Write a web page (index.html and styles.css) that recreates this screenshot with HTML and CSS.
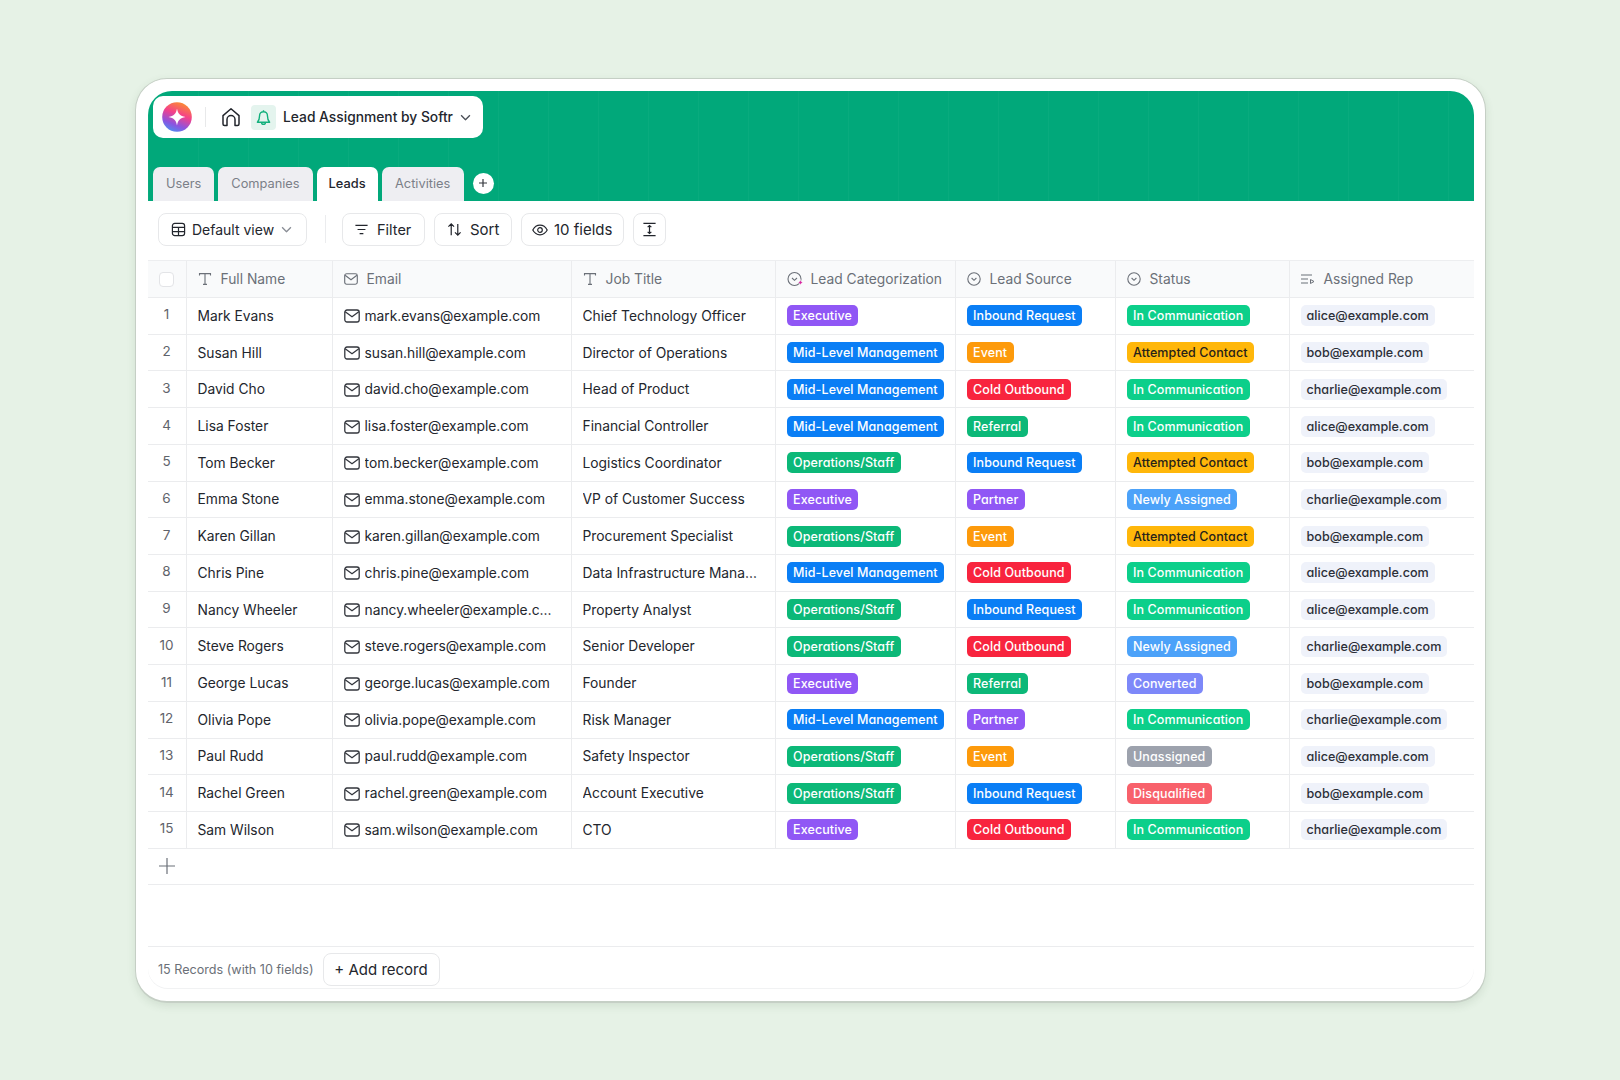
FILE: index.html
```html
<!DOCTYPE html>
<html>
<head>
    <title>Lead Assignment by Softr</title>
    <link rel="stylesheet" href="styles.css">
</head>
<body>
    <svg class="sprite" xmlns="http://www.w3.org/2000/svg">
        <symbol id="i-mail" viewBox="0 0 16 14"><rect x="0.8" y="1" width="14.4" height="12" rx="2.2" fill="none" stroke="currentColor" stroke-width="1.3"/><path d="M1.2 2.8 8 7.8l6.8-5" fill="none" stroke="currentColor" stroke-width="1.3"/></symbol>
        <symbol id="i-text" viewBox="0 0 14 14"><path d="M1.5 3.4V1.6h11v1.8M7 1.6v10.8M5 12.4h4" fill="none" stroke="currentColor" stroke-width="1.1"/></symbol>
        <symbol id="i-select" viewBox="0 0 14 14"><circle cx="7" cy="7" r="6.2" fill="none" stroke="currentColor" stroke-width="1.1"/><path d="M4.6 6 7 8.3 9.4 6" fill="none" stroke="currentColor" stroke-width="1.1"/></symbol>
        <symbol id="i-chevron" viewBox="0 0 10 6"><path d="M1 1l4 4 4-4" fill="none" stroke="currentColor" stroke-width="1.2"/></symbol>
    </svg>

    <div class="frame">
        <div class="app">
            <!-- Green header with base name and tabs -->
            <div class="topbar">
                <div class="base-pill">
                    <svg class="logo" viewBox="0 0 30 30">
                        <defs>
                            <linearGradient id="logoFill" x1="0.7" y1="0" x2="0.3" y2="1">
                                <stop offset="0" stop-color="#fb8f2e"/>
                                <stop offset="0.4" stop-color="#f4418a"/>
                                <stop offset="0.75" stop-color="#8a55e0"/>
                                <stop offset="1" stop-color="#4f8df0"/>
                            </linearGradient>
                        </defs>
                        <circle cx="15" cy="15" r="14.8" fill="url(#logoFill)"/>
                        <path d="M15 6.5c.9 5.3 3 7.5 8.500 8.500-5.500 1-7.600 3.200-8.500 8.500-.9-5.300-3-7.500-8.500-8.500 5.500-1 7.600-3.200 8.500-8.500z" fill="#fff"/>
                    </svg>
                    <span class="pill-divider"></span>
                    <svg class="home-icon" viewBox="0 0 20 20"><path d="M2 8.600 10 1.800l8 6.800v8.400a1.500 1.500 0 0 1-1.500 1.500H14v-6a4 4 0 0 0-8 0v6H3.500A1.500 1.500 0 0 1 2 17z" fill="none" stroke="#23262d" stroke-width="1.500" stroke-linejoin="round"/></svg>
                    <span class="bell-tile">
                        <svg viewBox="0 0 16 18"><path d="M8 1.200v1.400M3.800 7a4.200 4.200 0 0 1 8.400 0c0 4 1 5.500 2.300 7H1.500c1.300-1.500 2.300-3 2.300-7zM6 14.200a2 2 0 0 0 4 0" fill="none" stroke="#12b07c" stroke-width="1.500" stroke-linejoin="round"/></svg>
                    </span>
                    <span class="base-name">Lead Assignment by Softr</span>
                    <svg class="chevron" viewBox="0 0 10 6"><use href="#i-chevron"/></svg>
                </div>
                <div class="tabs">
                    <span class="tab">Users</span>
                    <span class="tab">Companies</span>
                    <span class="tab active">Leads</span>
                    <span class="tab">Activities</span>
                    <span class="tab-add">
                        <svg viewBox="0 0 10 10"><path d="M5 1v8M1 5h8" stroke="#33363d" stroke-width="1.200"/></svg>
                    </span>
                </div>
            </div>

            <!-- Toolbar -->
            <div class="toolbar">
                <button class="tool view-btn">
                    <svg class="tool-icon" viewBox="0 0 16 16"><rect x="1.500" y="1.500" width="13" height="13" rx="2.500" fill="none" stroke="#23262d" stroke-width="1.300"/><path d="M1.500 5.800h13M1.500 10.200h13M8 5.800v8.700" stroke="#23262d" stroke-width="1.300"/></svg>
                    Default view
                    <svg class="chevron muted" viewBox="0 0 10 6"><use href="#i-chevron"/></svg>
                </button>
                <span class="tool-divider"></span>
                <button class="tool filter-btn">
                    <svg class="tool-icon" viewBox="0 0 16 16"><path d="M1.500 3.500h13M3.800 8h8.400M6 12.500h4" stroke="#23262d" stroke-width="1.300"/></svg>
                    Filter
                </button>
                <button class="tool sort-btn">
                    <svg class="tool-icon" viewBox="0 0 16 16"><path d="M4.500 14V2M1.500 5l3-3 3 3M11.500 2v12M8.500 11l3 3 3-3" fill="none" stroke="#23262d" stroke-width="1.300"/></svg>
                    Sort
                </button>
                <button class="tool fields-btn">
                    <svg class="tool-icon" viewBox="0 0 16 16"><path d="M.8 8C2.500 4.800 5 3.200 8 3.200S13.500 4.800 15.200 8c-1.700 3.200-4.200 4.800-7.200 4.800S2.500 11.200.8 8z" fill="none" stroke="#23262d" stroke-width="1.200"/><circle cx="8" cy="8" r="2.300" fill="none" stroke="#23262d" stroke-width="1.200"/></svg>
                    10 fields
                </button>
                <button class="tool height-btn">
                    <svg class="tool-icon" viewBox="0 0 16 16"><path d="M1.500 1.500h13M1.500 14.500h13M8 4v8M6 5.500 8 3.800l2 1.700M6 10.500l2 1.700 2-1.700" fill="none" stroke="#23262d" stroke-width="1.300"/></svg>
                </button>
            </div>

            <!-- Table -->
            <div class="grid">
                <div class="row head">
                    <div class="cell num"><span class="checkbox"></span></div>
                    <div class="cell"><svg class="head-icon"><use href="#i-text"/></svg>Full Name</div>
                    <div class="cell"><svg class="head-icon"><use href="#i-mail"/></svg>Email</div>
                    <div class="cell"><svg class="head-icon"><use href="#i-text"/></svg>Job Title</div>
                    <div class="cell">
                        <svg class="head-icon ai" viewBox="0 0 18 16"><circle cx="7.500" cy="8" r="6.500" fill="none" stroke="currentColor" stroke-width="1.100"/><path d="M5 7l2.500 2.300L10 7" fill="none" stroke="currentColor" stroke-width="1.100"/><path d="M13.500 8.500c.3 2 .9 2.600 3 3-2.100.4-2.700 1-3 3-.3-2-.9-2.600-3-3 2.100-.4 2.700-1 3-3z" fill="#d6249f" stroke="#fff" stroke-width="0.500"/></svg>
                        Lead Categorization
                    </div>
                    <div class="cell"><svg class="head-icon"><use href="#i-select"/></svg>Lead Source</div>
                    <div class="cell"><svg class="head-icon"><use href="#i-select"/></svg>Status</div>
                    <div class="cell"><svg class="head-icon" viewBox="0 0 14 14"><path d="M0 3h11M0 7h7M0 11h7" stroke="currentColor" stroke-width="1.100"/><path d="M9.500 7.500v4l3.500-2z" fill="none" stroke="currentColor" stroke-width="1"/></svg>Assigned Rep</div>
                </div>

                <div class="row">
                    <div class="cell num">1</div><div class="cell">Mark Evans</div>
                    <div class="cell"><svg class="mail"><use href="#i-mail"/></svg><span class="clip">mark.evans@example.com</span></div>
                    <div class="cell"><span class="clip">Chief Technology Officer</span></div>
                    <div class="cell"><span class="badge purple">Executive</span></div>
                    <div class="cell"><span class="badge blue">Inbound Request</span></div>
                    <div class="cell"><span class="badge mint">In Communication</span></div>
                    <div class="cell"><span class="chip">alice@example.com</span></div>
                </div>
                <div class="row">
                    <div class="cell num">2</div><div class="cell">Susan Hill</div>
                    <div class="cell"><svg class="mail"><use href="#i-mail"/></svg><span class="clip">susan.hill@example.com</span></div>
                    <div class="cell"><span class="clip">Director of Operations</span></div>
                    <div class="cell"><span class="badge blue">Mid-Level Management</span></div>
                    <div class="cell"><span class="badge orange">Event</span></div>
                    <div class="cell"><span class="badge amber">Attempted Contact</span></div>
                    <div class="cell"><span class="chip">bob@example.com</span></div>
                </div>
                <div class="row">
                    <div class="cell num">3</div><div class="cell">David Cho</div>
                    <div class="cell"><svg class="mail"><use href="#i-mail"/></svg><span class="clip">david.cho@example.com</span></div>
                    <div class="cell"><span class="clip">Head of Product</span></div>
                    <div class="cell"><span class="badge blue">Mid-Level Management</span></div>
                    <div class="cell"><span class="badge red">Cold Outbound</span></div>
                    <div class="cell"><span class="badge mint">In Communication</span></div>
                    <div class="cell"><span class="chip">charlie@example.com</span></div>
                </div>
                <div class="row">
                    <div class="cell num">4</div><div class="cell">Lisa Foster</div>
                    <div class="cell"><svg class="mail"><use href="#i-mail"/></svg><span class="clip">lisa.foster@example.com</span></div>
                    <div class="cell"><span class="clip">Financial Controller</span></div>
                    <div class="cell"><span class="badge blue">Mid-Level Management</span></div>
                    <div class="cell"><span class="badge green">Referral</span></div>
                    <div class="cell"><span class="badge mint">In Communication</span></div>
                    <div class="cell"><span class="chip">alice@example.com</span></div>
                </div>
                <div class="row">
                    <div class="cell num">5</div><div class="cell">Tom Becker</div>
                    <div class="cell"><svg class="mail"><use href="#i-mail"/></svg><span class="clip">tom.becker@example.com</span></div>
                    <div class="cell"><span class="clip">Logistics Coordinator</span></div>
                    <div class="cell"><span class="badge green">Operations/Staff</span></div>
                    <div class="cell"><span class="badge blue">Inbound Request</span></div>
                    <div class="cell"><span class="badge amber">Attempted Contact</span></div>
                    <div class="cell"><span class="chip">bob@example.com</span></div>
                </div>
                <div class="row">
                    <div class="cell num">6</div><div class="cell">Emma Stone</div>
                    <div class="cell"><svg class="mail"><use href="#i-mail"/></svg><span class="clip">emma.stone@example.com</span></div>
                    <div class="cell"><span class="clip">VP of Customer Success</span></div>
                    <div class="cell"><span class="badge purple">Executive</span></div>
                    <div class="cell"><span class="badge purple">Partner</span></div>
                    <div class="cell"><span class="badge sky">Newly Assigned</span></div>
                    <div class="cell"><span class="chip">charlie@example.com</span></div>
                </div>
                <div class="row">
                    <div class="cell num">7</div><div class="cell">Karen Gillan</div>
                    <div class="cell"><svg class="mail"><use href="#i-mail"/></svg><span class="clip">karen.gillan@example.com</span></div>
                    <div class="cell"><span class="clip">Procurement Specialist</span></div>
                    <div class="cell"><span class="badge green">Operations/Staff</span></div>
                    <div class="cell"><span class="badge orange">Event</span></div>
                    <div class="cell"><span class="badge amber">Attempted Contact</span></div>
                    <div class="cell"><span class="chip">bob@example.com</span></div>
                </div>
                <div class="row">
                    <div class="cell num">8</div><div class="cell">Chris Pine</div>
                    <div class="cell"><svg class="mail"><use href="#i-mail"/></svg><span class="clip">chris.pine@example.com</span></div>
                    <div class="cell"><span class="clip">Data Infrastructure Manager</span></div>
                    <div class="cell"><span class="badge blue">Mid-Level Management</span></div>
                    <div class="cell"><span class="badge red">Cold Outbound</span></div>
                    <div class="cell"><span class="badge mint">In Communication</span></div>
                    <div class="cell"><span class="chip">alice@example.com</span></div>
                </div>
                <div class="row">
                    <div class="cell num">9</div><div class="cell">Nancy Wheeler</div>
                    <div class="cell"><svg class="mail"><use href="#i-mail"/></svg><span class="clip">nancy.wheeler@example.com</span></div>
                    <div class="cell"><span class="clip">Property Analyst</span></div>
                    <div class="cell"><span class="badge green">Operations/Staff</span></div>
                    <div class="cell"><span class="badge blue">Inbound Request</span></div>
                    <div class="cell"><span class="badge mint">In Communication</span></div>
                    <div class="cell"><span class="chip">alice@example.com</span></div>
                </div>
                <div class="row">
                    <div class="cell num">10</div><div class="cell">Steve Rogers</div>
                    <div class="cell"><svg class="mail"><use href="#i-mail"/></svg><span class="clip">steve.rogers@example.com</span></div>
                    <div class="cell"><span class="clip">Senior Developer</span></div>
                    <div class="cell"><span class="badge green">Operations/Staff</span></div>
                    <div class="cell"><span class="badge red">Cold Outbound</span></div>
                    <div class="cell"><span class="badge sky">Newly Assigned</span></div>
                    <div class="cell"><span class="chip">charlie@example.com</span></div>
                </div>
                <div class="row">
                    <div class="cell num">11</div><div class="cell">George Lucas</div>
                    <div class="cell"><svg class="mail"><use href="#i-mail"/></svg><span class="clip">george.lucas@example.com</span></div>
                    <div class="cell"><span class="clip">Founder</span></div>
                    <div class="cell"><span class="badge purple">Executive</span></div>
                    <div class="cell"><span class="badge green">Referral</span></div>
                    <div class="cell"><span class="badge periwinkle">Converted</span></div>
                    <div class="cell"><span class="chip">bob@example.com</span></div>
                </div>
                <div class="row">
                    <div class="cell num">12</div><div class="cell">Olivia Pope</div>
                    <div class="cell"><svg class="mail"><use href="#i-mail"/></svg><span class="clip">olivia.pope@example.com</span></div>
                    <div class="cell"><span class="clip">Risk Manager</span></div>
                    <div class="cell"><span class="badge blue">Mid-Level Management</span></div>
                    <div class="cell"><span class="badge purple">Partner</span></div>
                    <div class="cell"><span class="badge mint">In Communication</span></div>
                    <div class="cell"><span class="chip">charlie@example.com</span></div>
                </div>
                <div class="row">
                    <div class="cell num">13</div><div class="cell">Paul Rudd</div>
                    <div class="cell"><svg class="mail"><use href="#i-mail"/></svg><span class="clip">paul.rudd@example.com</span></div>
                    <div class="cell"><span class="clip">Safety Inspector</span></div>
                    <div class="cell"><span class="badge green">Operations/Staff</span></div>
                    <div class="cell"><span class="badge orange">Event</span></div>
                    <div class="cell"><span class="badge gray">Unassigned</span></div>
                    <div class="cell"><span class="chip">alice@example.com</span></div>
                </div>
                <div class="row">
                    <div class="cell num">14</div><div class="cell">Rachel Green</div>
                    <div class="cell"><svg class="mail"><use href="#i-mail"/></svg><span class="clip">rachel.green@example.com</span></div>
                    <div class="cell"><span class="clip">Account Executive</span></div>
                    <div class="cell"><span class="badge green">Operations/Staff</span></div>
                    <div class="cell"><span class="badge blue">Inbound Request</span></div>
                    <div class="cell"><span class="badge coral">Disqualified</span></div>
                    <div class="cell"><span class="chip">bob@example.com</span></div>
                </div>
                <div class="row">
                    <div class="cell num">15</div><div class="cell">Sam Wilson</div>
                    <div class="cell"><svg class="mail"><use href="#i-mail"/></svg><span class="clip">sam.wilson@example.com</span></div>
                    <div class="cell"><span class="clip">CTO</span></div>
                    <div class="cell"><span class="badge purple">Executive</span></div>
                    <div class="cell"><span class="badge red">Cold Outbound</span></div>
                    <div class="cell"><span class="badge mint">In Communication</span></div>
                    <div class="cell"><span class="chip">charlie@example.com</span></div>
                </div>

                <div class="add-row">
                    <svg viewBox="0 0 16 16"><path d="M8 0v16M0 8h16" stroke="#6b7078" stroke-width="1.200"/></svg>
                </div>
            </div>

            <!-- Footer -->
            <div class="footer">
                <span class="count">15 Records (with 10 fields)</span>
                <button class="tool add-btn">+ Add record</button>
            </div>
        </div>
    </div>
</body>
</html>
```

FILE: styles.css
```css
body {
    font-family: Inter, "Noto Sans", sans-serif;
    background: #e6f2e6;
    margin: 0;
    height: 100vh;
    display: flex;
    justify-content: center;
    align-items: center;
    color: #23262d;
}

.sprite {
    display: none;
}

.frame {
    width: 1351px;
    height: 925px;
    box-sizing: border-box;
    padding: 12.5px 11px 12px 12px;
    background: #fff;
    border-radius: 32px;
    border: 1px solid #c5cfc5;
    border-width: 1px 1.5px 2px 1.5px;
    box-shadow: 0 3px 8px rgba(60, 90, 60, 0.12);
}

.app {
    height: 100%;
    display: flex;
    flex-direction: column;
    border-radius: 24px 24px 20px 20px;
    overflow: hidden;
    box-shadow: inset 0 -1px 0 #f1f2f3;
}

/* Green header */
.topbar {
    height: 109.5px;
    flex: none;
    box-sizing: border-box;
    background-color: #01a87a;
    background-image: linear-gradient(90deg, rgba(255, 255, 255, 0.03) 1px, transparent 1px);
    background-size: 50px 100%;
    padding: 5px 5.5px 0;
    display: flex;
    flex-direction: column;
    justify-content: space-between;
}

.base-pill {
    width: 330px;
    height: 42px;
    box-sizing: border-box;
    background: #fff;
    border-radius: 10px;
    padding-left: 9px;
    display: flex;
    align-items: center;
}

.logo {
    width: 30px;
    height: 30px;
    flex: none;
}

.pill-divider {
    width: 1px;
    height: 20px;
    background: #e8e9ea;
    margin: 0 15px 0 13px;
}

.home-icon {
    width: 20px;
    height: 20px;
    flex: none;
}

.bell-tile {
    width: 25px;
    height: 25px;
    flex: none;
    background: #e4f4ee;
    border-radius: 4px;
    margin: 0 7px 0 10px;
    display: flex;
    align-items: center;
    justify-content: center;
}

.bell-tile svg {
    width: 15px;
    height: 17px;
}

.base-name {
    font-size: 13.8px;
    font-weight: 500;
    color: #23262d;
}

.chevron {
    width: 11px;
    height: 7px;
    flex: none;
    margin-left: 7px;
    color: #4b4f57;
}

.chevron.muted {
    margin-left: 1px;
    color: #8a8e96;
}

.tabs {
    display: flex;
    align-items: flex-end;
    gap: 4px;
}

.tab {
    height: 34px;
    box-sizing: border-box;
    padding: 0 13px;
    background: #eeeef2;
    border-radius: 7px 7px 0 0;
    font-size: 12.8px;
    color: #7b7f88;
    display: flex;
    align-items: center;
}

.tab:nth-child(4) {
    padding: 0 13.5px;
}

.tab.active {
    background: #fff;
    color: #23262d;
    font-weight: 500;
    padding: 0 12px;
}

.tab-add {
    width: 21px;
    height: 21px;
    margin: 0 0 7px 5px;
    background: #fff;
    border-radius: 50%;
    display: flex;
    align-items: center;
    justify-content: center;
}

.tab-add svg {
    width: 10px;
    height: 10px;
}

/* Toolbar */
.toolbar {
    height: 59.5px;
    flex: none;
    box-sizing: border-box;
    padding: 12.5px 10.5px;
    display: flex;
    align-items: flex-start;
    gap: 9px;
}

.tool {
    height: 33px;
    box-sizing: border-box;
    background: #fff;
    border: 1px solid #e7e8ea;
    border-radius: 8px;
    font-family: inherit;
    font-size: 15px;
    color: #23262d;
    padding: 0 12px;
    display: flex;
    align-items: center;
    gap: 6px;
    white-space: nowrap;
}

.tool-icon {
    width: 15px;
    height: 15px;
    flex: none;
}

.view-btn {
    width: 149px;
    font-size: 14px;
}

.tool-divider {
    width: 1px;
    height: 28px;
    margin: 2px 7px 0 9px;
    background: #ebecee;
}

.filter-btn {
    width: 83px;
    padding: 0 11px;
    gap: 8px;
    font-size: 14.5px;
}

.sort-btn {
    width: 78px;
    gap: 8px;
}

.fields-btn {
    width: 103px;
    padding: 0 10px;
}

.fields-btn .tool-icon {
    width: 16px;
    height: 16px;
}

.height-btn {
    width: 33px;
    padding: 0;
    justify-content: center;
}

/* Table */
.grid {
    flex: none;
    font-size: 13.8px;
}

.row {
    height: 36.73px;
    box-sizing: border-box;
    display: grid;
    grid-template-columns: 39px 146px 239px 204px 180px 160px 174px 183px;
    border-bottom: 1.5px solid #ebecee;
}

.row.head {
    height: 38px;
    background: #f9fafb;
    color: #6b7078;
    border-top: 1px solid #edeef0;
}

.cell {
    min-width: 0;
    box-sizing: border-box;
    padding: 0 11px;
    display: flex;
    align-items: center;
    white-space: nowrap;
    border-right: 1.5px solid #ebecee;
    font-weight: 400;
}

.row .cell:last-child {
    border-right: none;
}

.cell.num {
    padding: 0 0 3px;
    justify-content: center;
    font-size: 13.5px;
    color: #5f636b;
}

.checkbox {
    width: 15px;
    height: 15px;
    box-sizing: border-box;
    margin-top: 3px;
    background: #fff;
    border: 1px solid #e3e4e7;
    border-radius: 4px;
}

.head-icon {
    width: 14px;
    height: 14px;
    flex: none;
    margin-right: 9px;
}

.head-icon.ai {
    width: 18px;
    height: 16px;
    margin-right: 6px;
}

.mail {
    width: 16px;
    height: 14px;
    flex: none;
    margin: 1px 5px 0 0;
    color: #33363d;
}

.clip {
    overflow: hidden;
    text-overflow: ellipsis;
    padding-right: 3px;
}

.badge {
    height: 21px;
    padding: 0 6.5px;
    border-radius: 5px;
    font-size: 12.5px;
    font-weight: 500;
    line-height: 21px;
    color: #fff;
    font-feature-settings: "cv11";
    letter-spacing: 0.1px;
}

.blue { background: #0a7ef5; }
.purple { background: #9057f5; }
.green { background: #0cb878; }
.mint { background: #0ccf8a; }
.orange { background: #fd9a0b; }
.red { background: #f8243e; }
.amber { background: #ffb70a; color: #26221a; }
.sky { background: #4ca2f9; }
.periwinkle { background: #7d88f9; }
.gray { background: #9da2ad; }
.coral { background: #f8616b; }

.chip {
    height: 21px;
    padding: 0 6px;
    background: #eff2fa;
    border-radius: 5px;
    font-size: 12.6px;
    font-weight: 500;
    line-height: 21px;
    color: #2c2f38;
    font-feature-settings: "cv11";
}

.add-row {
    height: 36px;
    box-sizing: border-box;
    padding-left: 11px;
    display: flex;
    align-items: center;
    border-bottom: 1.5px solid #ebecee;
}

.add-row svg {
    width: 16px;
    height: 16px;
}

/* Footer */
.footer {
    margin-top: auto;
    height: 43px;
    flex: none;
    box-sizing: border-box;
    padding: 6px 0 0 10.5px;
    display: flex;
    align-items: flex-start;
    gap: 9px;
    border-top: 1px solid #ebecee;
}

.count {
    font-size: 12.6px;
    color: #6b7078;
    line-height: 34px;
}

.add-btn {
    width: 117px;
    justify-content: center;
}
```
